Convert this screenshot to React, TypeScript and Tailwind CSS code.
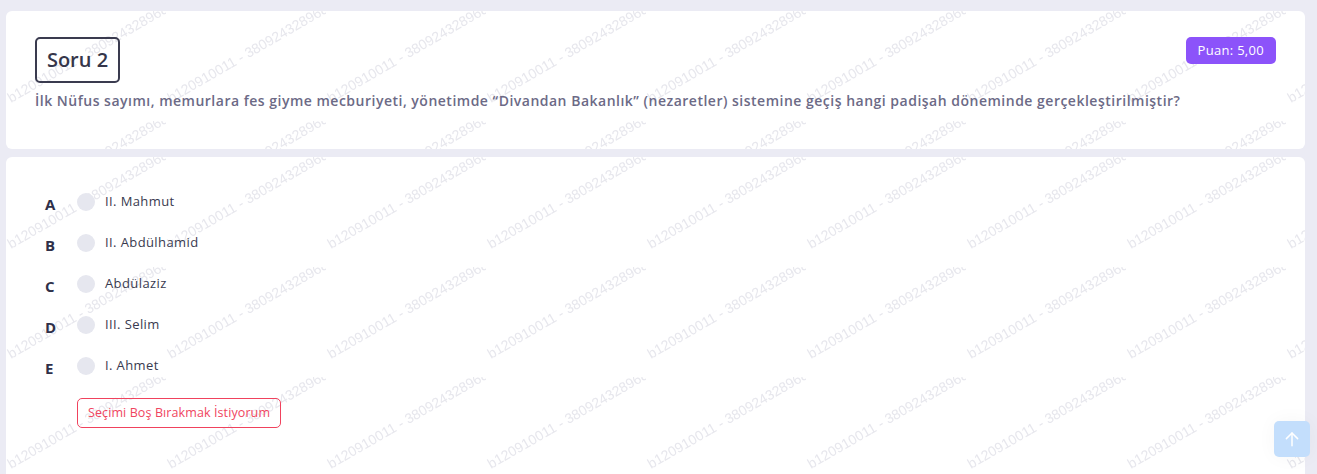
import React from 'react';

const OPTIONS = [
  { key: 'A', label: 'II. Mahmut' },
  { key: 'B', label: 'II. Abdülhamid' },
  { key: 'C', label: 'Abdülaziz' },
  { key: 'D', label: 'III. Selim' },
  { key: 'E', label: 'I. Ahmet' },
];

// tiled watermark drawn over each card
function Watermark({ id }: { id: string }) {
  return (
    <svg className="pointer-events-none absolute inset-0 h-full w-full" aria-hidden="true">
      <defs>
        <pattern id={id} x="0" y="0" width="160" height="110" patternUnits="userSpaceOnUse">
          <text
            x="5"
            y="92"
            transform="rotate(-30 5 92)"
            fontFamily="'Liberation Sans', Arial, sans-serif"
            fontSize="14"
            fill="#e7e7ed"
          >
            b120910011 - 380924328968
          </text>
        </pattern>
      </defs>
      <rect width="100%" height="100%" fill={`url(#${id})`} />
    </svg>
  );
}

export default function App() {
  return (
    <div className="h-[474px] overflow-hidden bg-[#ebebf4] pl-[6px] pr-[12px] pt-[11px] font-['Open_Sans',sans-serif]">
      {/* QUESTION CARD */}
      <div className="relative h-[138px] rounded-md bg-white px-[29px] pt-[26px]">
        <div className="relative z-10 flex items-start justify-between">
          <div className="flex h-[46px] w-[85px] items-center justify-center rounded-[5px] border-2 border-[#3a3b4f] text-[20px] font-semibold text-[#35364a]">
            Soru 2
          </div>
          <span className="rounded-[5px] bg-[#8c53fa] px-[12px] py-[4px] text-[13px] font-medium leading-[19px] tracking-[0.3px] text-white">
            Puan: 5,00
          </span>
        </div>
        <p className="relative z-10 mt-[8px] text-[14px] font-semibold leading-[20px] tracking-[0.5px] text-[#6c6a86]">
          İlk Nüfus sayımı, memurlara fes giyme mecburiyeti, yönetimde “Divandan Bakanlık” (nezaretler) sistemine geçiş hangi padişah döneminde gerçekleştirilmiştir?
        </p>
        <Watermark id="wm1" />
      </div>

      {/* OPTIONS CARD */}
      <div className="relative mt-[8px] h-[340px] rounded-md bg-white pl-[39px] pt-[35px]">
        <div className="relative z-10 flex flex-col gap-[21px]">
          {OPTIONS.map((o) => (
            <div key={o.key} className="flex h-[20px] items-center">
              <span className="mt-[4px] w-[32px] text-[15px] font-bold text-[#2f3049]">{o.key}</span>
              <span className="h-[18px] w-[18px] rounded-full bg-[#e6e7ef]" />
              <span className="ml-[10px] text-[13px] tracking-[0.4px] text-[#393a4f]">{o.label}</span>
            </div>
          ))}
        </div>
        <button className="relative z-10 ml-[32px] mt-[22px] h-[30px] rounded-[5px] border border-[#f0425d] px-[10px] text-[12.5px] tracking-[0.1px] text-[#f04560]">
          Seçimi Boş Bırakmak İstiyorum
        </button>
        <Watermark id="wm2" />
      </div>

      {/* scroll to top */}
      <div className="absolute left-[1274px] top-[421px] flex h-[36px] w-[36px] items-center justify-center rounded-[5px] bg-[#c3defc] shadow-[0_0_20px_rgba(0,0,0,0.04)]">
        <svg width="18" height="18" viewBox="0 0 24 24" fill="none" stroke="white" strokeWidth="2" strokeLinecap="round" strokeLinejoin="round">
          <path d="M12 21V4" />
          <path d="M4.5 11.5L12 4l7.5 7.5" />
        </svg>
      </div>
    </div>
  );
}
